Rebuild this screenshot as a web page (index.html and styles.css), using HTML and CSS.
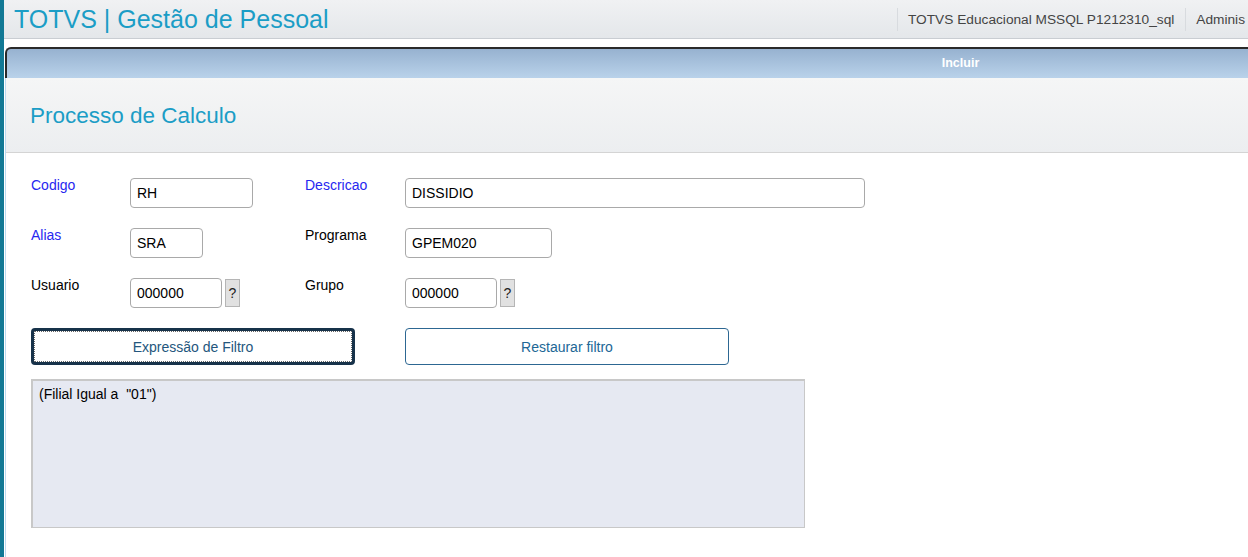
FILE: index.html
```html
<!DOCTYPE html>
<html>
  <head>
    <meta charset="utf-8">
    <title>TOTVS | Gestão de Pessoal</title>
    <link rel="stylesheet" href="styles.css">
  </head>
  <body>
    <div class="page">
      <div class="topbar">
        <div class="brand">TOTVS | Gestão de Pessoal</div>
        <div class="topItem">TOTVS Educacional MSSQL P1212310_sql</div>
        <div class="topItem last">Adminis</div>
      </div>
      <div class="panel">
        <div class="panelHead">Incluir</div>
        <div class="panelBody">
          <div class="titleArea">
            <h1 class="title">Processo de Calculo</h1>
          </div>
          <div class="form">
            <div class="grid">
              <label class="lbl req">Codigo</label>
              <div class="cell"><input type="text" class="fld w122" value="RH"></div>
              <label class="lbl req">Descricao</label>
              <div class="cell"><input type="text" class="fld w459" value="DISSIDIO"></div>

              <label class="lbl req">Alias</label>
              <div class="cell"><input type="text" class="fld w72" value="SRA"></div>
              <label class="lbl">Programa</label>
              <div class="cell"><input type="text" class="fld w146" value="GPEM020"></div>

              <label class="lbl">Usuario</label>
              <div class="cell"><input type="text" class="fld w91" value="000000"><button class="ask">?</button></div>
              <label class="lbl">Grupo</label>
              <div class="cell"><input type="text" class="fld w91" value="000000"><button class="ask">?</button></div>
            </div>
            <div class="btnRow">
              <button class="btn focused">Expressão de Filtro</button>
              <button class="btn">Restaurar filtro</button>
            </div>
            <div class="filterBox">(Filial Igual a &nbsp;"01")</div>
          </div>
        </div>
      </div>
    </div>
  </body>
</html>
```

FILE: styles.css
```css
html, body {
  margin: 0;
  padding: 0;
  height: 100%;
  overflow: hidden;
  background: #fff;
}
body {
  font-family: "Liberation Sans", Arial, sans-serif;
  border-left: 4px solid #127995;
}
.page {
  width: 1910px;
  height: 100%;
  display: flex;
  flex-direction: column;
}
.topbar {
  height: 38px;
  display: flex;
  align-items: center;
  background: linear-gradient(#f0f1f3, #e4e7ea);
  border-bottom: 1px solid #c9cdd2;
}
.brand {
  flex: none;
  width: 893px;
  padding-left: 10px;
  box-sizing: border-box;
  font-size: 25px;
  color: #1b9dc6;
}
.topItem {
  font-size: 13.7px;
  color: #444;
  padding: 0 11px 0 10px;
  border-left: 1px solid #d8dbdf;
  line-height: 23px;
}
.topItem.last {
  padding-right: 0;
}
.panel {
  margin-top: 8px;
  margin-left: 1px;
  flex: 1;
  display: flex;
  flex-direction: column;
}
.panelHead {
  height: 29px;
  line-height: 29px;
  text-align: center;
  font-size: 12.5px;
  font-weight: bold;
  color: #fff;
  background: linear-gradient(#97b2d0, #b9d2ea);
  border-top: 2px solid #2a2a2a;
  border-left: 2px solid #2a2a2a;
  border-top-left-radius: 6px;
}
.panelBody {
  flex: 1;
  border-left: 1px solid #bcd9ef;
}
.titleArea {
  height: 74px;
  background: linear-gradient(#f5f6f6, #eceef0);
  border-bottom: 1px solid #d4d4d4;
  display: flex;
  align-items: center;
}
.title {
  margin: 2px 0 0 24px;
  font-size: 22.5px;
  font-weight: normal;
  color: #1b9dc6;
}
.form {
  padding: 25px 0 0 25px;
}
.grid {
  display: grid;
  grid-template-columns: 99px 175px 100px auto;
  row-gap: 20px;
}
.lbl {
  font-size: 14px;
  color: #000;
  margin-top: -1px;
}
.lbl.req {
  color: #2727f0;
}
.cell {
  display: flex;
  align-items: center;
  gap: 3px;
}
.fld {
  height: 30px;
  box-sizing: border-box;
  border: 1px solid #a9a9a9;
  border-radius: 4px;
  padding: 0 6px;
  font-family: "Liberation Sans", Arial, sans-serif;
  font-size: 14px;
  color: #000;
  background: #fff;
}
.w122 { width: 123px; }
.w459 { width: 460px; }
.w72 { width: 73px; }
.w146 { width: 147px; }
.w91 { width: 92px; }
.ask {
  width: 15px;
  height: 28px;
  padding: 0;
  border: 1px solid #b5b5b5;
  background: #e1e1e1;
  font-family: "Liberation Sans", Arial, sans-serif;
  font-size: 14px;
  color: #222;
}
.btnRow {
  display: flex;
  gap: 50px;
  margin-top: 20px;
}
.btn {
  width: 324px;
  height: 37px;
  background: #fff;
  border: 1px solid #2d6792;
  border-radius: 4px;
  font-family: "Liberation Sans", Arial, sans-serif;
  font-size: 14px;
  color: #216796;
}
.btn.focused {
  border: 3px solid #17324a;
  outline: 1px dotted #666;
  outline-offset: -4px;
  color: #24567d;
}
.filterBox {
  margin-top: 14px;
  width: 774px;
  height: 149px;
  box-sizing: border-box;
  background: #e6e9f2;
  border: 1px solid #c8c8c8;
  border-top-width: 2px;
  border-left-width: 2px;
  padding: 5px 6px;
  font-size: 14px;
  color: #000;
}
```
